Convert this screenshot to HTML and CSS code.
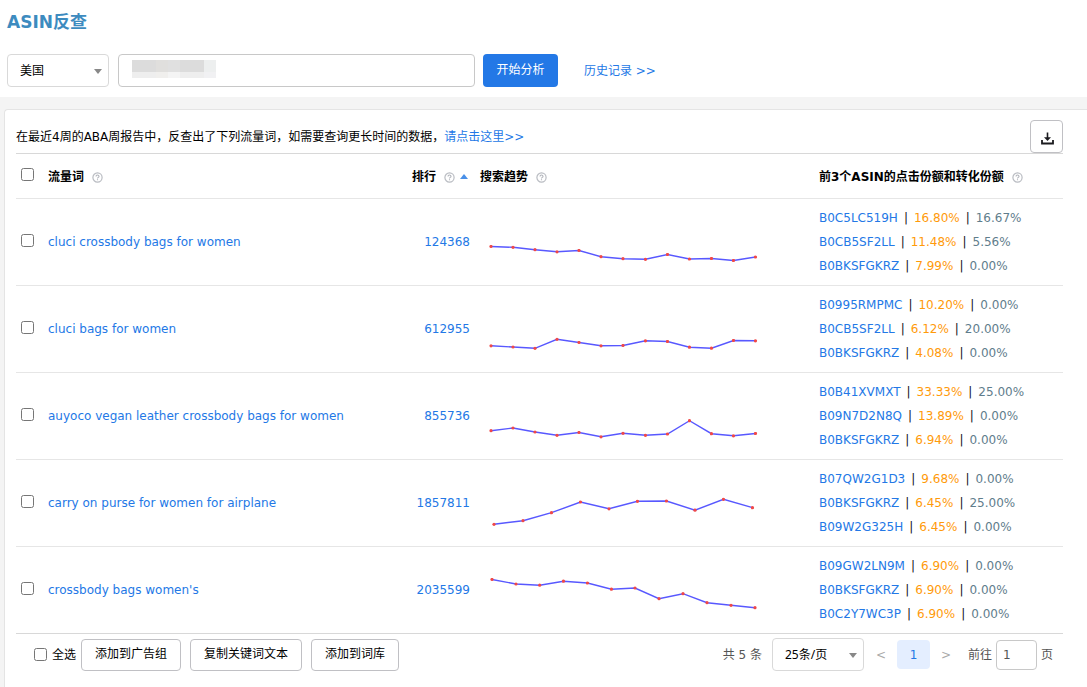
FILE: index.html
```html
<!DOCTYPE html>
<html lang="zh-CN">
<head>
<meta charset="utf-8">
<title>ASIN反查</title>
<link rel="stylesheet" href="styles.css">
</head>
<body>
<svg class="defs" aria-hidden="true">
  <defs>
    <marker id="dot" markerWidth="4" markerHeight="4" refX="2" refY="2" markerUnits="userSpaceOnUse"><circle cx="2" cy="2" r="1.6" fill="#f04848"/></marker>
    <symbol id="help" viewBox="0 0 11 11"><circle cx="5.5" cy="5.5" r="4.6" fill="none" stroke="#b9bcc2" stroke-width="1.2"/><path d="M4 4.6C4 2.6 7 2.6 7 4.4C7 5.4 5.5 5.4 5.5 6.5M5.5 7.2V8.3" fill="none" stroke="#b0b3ba" stroke-width="1.1"/></symbol>
    <symbol id="caret" viewBox="0 0 8 5"><path d="M0 0H8L4 5Z" fill="#888"/></symbol>
  </defs>
</svg>
<header class="top">
  <h1 class="title">ASIN反查</h1>
  <form class="search">
    <div class="select-box country">
      <select class="select" aria-label="站点"><option>美国</option></select>
      <svg class="caret"><use href="#caret"/></svg>
    </div>
    <div class="asin-box">
      <input class="asin" type="text" aria-label="ASIN">
      <div class="mask"><i></i><i></i><i></i><i></i><i></i><i></i><i></i></div>
    </div>
    <button class="primary" type="button">开始分析</button>
    <a class="history" href="#">历史记录 &gt;&gt;</a>
  </form>
</header>
<main class="card">
  <div class="intro">
    <p class="note">在最近4周的ABA周报告中，反查出了下列流量词，如需要查询更长时间的数据，<a href="#">请点击这里&gt;&gt;</a></p>
    <button class="download" type="button" aria-label="下载"><svg width="13" height="13" viewBox="0 0 13 13"><path d="M6.5 0.5V7" fill="none" stroke="#1b1b1f" stroke-width="1.6"/><path d="M3 5.2H10L6.5 9Z" fill="#1b1b1f"/><path d="M1 8V11.5H12V8" fill="none" stroke="#1b1b1f" stroke-width="1.8"/></svg></button>
  </div>
  <table class="words">
    <thead>
      <tr>
        <th class="c-check"><input type="checkbox" aria-label="选择全部"></th>
        <th class="c-word">流量词<svg class="help"><use href="#help"/></svg></th>
        <th class="c-rank">排行<svg class="help"><use href="#help"/></svg><svg class="sort" viewBox="0 0 8 5"><path d="M0 5H8L4 0Z" fill="#4a90e8"/></svg></th>
        <th class="c-trend">搜索趋势<svg class="help"><use href="#help"/></svg></th>
        <th class="c-share">前3个ASIN的点击份额和转化份额<svg class="help"><use href="#help"/></svg></th>
      </tr>
    </thead>
    <tbody>
      <tr>
        <td class="c-check"><input type="checkbox" aria-label="cluci crossbody bags for women"></td>
        <td><a href="#">cluci crossbody bags for women</a></td>
        <td class="c-rank"><a href="#">124368</a></td>
        <td class="c-trend"><svg class="trend" viewBox="0 -1 300 86"><polyline points="11,46.5 33,47.3 55,49.7 77,51.8 99,50.5 121,56.7 143,58.7 165.5,59.3 187.5,54.5 209.5,59 231.5,58.5 253.5,60.5 275.5,57"/></svg></td>
        <td class="c-share">
          <div class="share"><a href="#">B0C5LC519H</a><b>|</b><em>16.80%</em><b>|</b><span>16.67%</span></div>
          <div class="share"><a href="#">B0CB5SF2LL</a><b>|</b><em>11.48%</em><b>|</b><span>5.56%</span></div>
          <div class="share"><a href="#">B0BKSFGKRZ</a><b>|</b><em>7.99%</em><b>|</b><span>0.00%</span></div>
        </td>
      </tr>
      <tr>
        <td class="c-check"><input type="checkbox" aria-label="cluci bags for women"></td>
        <td><a href="#">cluci bags for women</a></td>
        <td class="c-rank"><a href="#">612955</a></td>
        <td class="c-trend"><svg class="trend" viewBox="0 -1 300 86"><polyline points="11,58.8 33,60 55,61.3 77,52.3 99,55.5 121,58.8 143,58.5 165.5,53.8 187.5,54.5 209.5,60.2 231.5,61.2 253.5,53.5 275.5,53.8"/></svg></td>
        <td class="c-share">
          <div class="share"><a href="#">B0995RMPMC</a><b>|</b><em>10.20%</em><b>|</b><span>0.00%</span></div>
          <div class="share"><a href="#">B0CB5SF2LL</a><b>|</b><em>6.12%</em><b>|</b><span>20.00%</span></div>
          <div class="share"><a href="#">B0BKSFGKRZ</a><b>|</b><em>4.08%</em><b>|</b><span>0.00%</span></div>
        </td>
      </tr>
      <tr>
        <td class="c-check"><input type="checkbox" aria-label="auyoco vegan leather crossbody bags for women"></td>
        <td><a href="#">auyoco vegan leather crossbody bags for women</a></td>
        <td class="c-rank"><a href="#">855736</a></td>
        <td class="c-trend"><svg class="trend" viewBox="0 -1 300 86"><polyline points="11,56.7 33,54 55,58 77,61.3 99,58.5 121,62.8 143,59.3 165.5,61.3 187.5,60 209.5,46.7 231.5,59.7 253.5,61.8 275.5,59.5"/></svg></td>
        <td class="c-share">
          <div class="share"><a href="#">B0B41XVMXT</a><b>|</b><em>33.33%</em><b>|</b><span>25.00%</span></div>
          <div class="share"><a href="#">B09N7D2N8Q</a><b>|</b><em>13.89%</em><b>|</b><span>0.00%</span></div>
          <div class="share"><a href="#">B0BKSFGKRZ</a><b>|</b><em>6.94%</em><b>|</b><span>0.00%</span></div>
        </td>
      </tr>
      <tr>
        <td class="c-check"><input type="checkbox" aria-label="carry on purse for women for airplane"></td>
        <td><a href="#">carry on purse for women for airplane</a></td>
        <td class="c-rank"><a href="#">1857811</a></td>
        <td class="c-trend"><svg class="trend" viewBox="0 -1 300 86"><polyline points="14,63.3 43,59.7 71.5,51.7 100.5,41 129,47.8 157.5,40.3 186.5,40 215,49.2 243.5,38.3 272.5,46.7"/></svg></td>
        <td class="c-share">
          <div class="share"><a href="#">B07QW2G1D3</a><b>|</b><em>9.68%</em><b>|</b><span>0.00%</span></div>
          <div class="share"><a href="#">B0BKSFGKRZ</a><b>|</b><em>6.45%</em><b>|</b><span>25.00%</span></div>
          <div class="share"><a href="#">B09W2G325H</a><b>|</b><em>6.45%</em><b>|</b><span>0.00%</span></div>
        </td>
      </tr>
      <tr>
        <td class="c-check"><input type="checkbox" aria-label="crossbody bags women's"></td>
        <td><a href="#">crossbody bags women's</a></td>
        <td class="c-rank"><a href="#">2035599</a></td>
        <td class="c-trend"><svg class="trend" viewBox="0 -1 300 86"><polyline points="12,31.5 36,36 59.7,37.2 83.5,33.2 107.5,35 131.5,41.2 155,40 179,50.7 203,45.7 227,54.7 251,57.3 275,59.7"/></svg></td>
        <td class="c-share">
          <div class="share"><a href="#">B09GW2LN9M</a><b>|</b><em>6.90%</em><b>|</b><span>0.00%</span></div>
          <div class="share"><a href="#">B0BKSFGKRZ</a><b>|</b><em>6.90%</em><b>|</b><span>0.00%</span></div>
          <div class="share"><a href="#">B0C2Y7WC3P</a><b>|</b><em>6.90%</em><b>|</b><span>0.00%</span></div>
        </td>
      </tr>
    </tbody>
  </table>
  <footer class="foot">
    <label class="all"><input type="checkbox"><span>全选</span></label>
    <div class="actions">
      <button class="plain" type="button">添加到广告组</button>
      <button class="plain" type="button">复制关键词文本</button>
      <button class="plain" type="button">添加到词库</button>
    </div>
    <nav class="pager" aria-label="分页">
      <span class="total">共 5 条</span>
      <div class="select-box size">
        <select class="select" aria-label="每页条数"><option>25条/页</option></select>
        <svg class="caret"><use href="#caret"/></svg>
      </div>
      <button class="arrow" type="button">&lt;</button>
      <button class="page" type="button">1</button>
      <button class="arrow" type="button">&gt;</button>
      <label class="goto">前往<input type="text" value="1">页</label>
    </nav>
  </footer>
</main>
</body>
</html>
```
FILE: styles.css
```css
* { box-sizing: border-box; }
body {
  margin: 0;
  min-height: 100vh;
  display: flex;
  flex-direction: column;
  background: #f4f4f4;
  color: #000;
  font: 12px/20px "DejaVu Sans", "Noto Sans CJK SC", sans-serif;
}
a { color: #2378e6; text-decoration: none; }
button, input, select { font: inherit; color: inherit; margin: 0; }
input[type="checkbox"] { width: 13px; height: 13px; display: block; }
.defs { position: absolute; width: 0; height: 0; }

.top { background: #fff; padding: 10px 7px; }
.title { margin: 0; font-size: 17px; line-height: 24px; color: #3d8bbf; }
.search { display: flex; align-items: center; padding-top: 20px; }
.select-box { position: relative; }
.select {
  appearance: none;
  width: 100%;
  height: 33px;
  padding: 0 12px;
  border: 1px solid #d9d9d9;
  border-radius: 4px;
  background: #fff;
  font-family: "Noto Sans", "Noto Sans CJK SC", sans-serif;
}
.caret { position: absolute; right: 7px; top: 15px; width: 8px; height: 5px; pointer-events: none; }
.country { width: 102px; }
.asin-box { position: relative; width: 357px; margin: 0 8px 0 9px; }
.asin { display: block; width: 100%; height: 33px; padding: 0 12px; border: 1px solid #c8c8c8; border-radius: 4px; background: #fff; }
.mask { position: absolute; left: 14px; top: 6px; display: flex; }
.mask i { width: 12px; height: 18px; background: linear-gradient(#dcdcdc 12px, #eee 12px); }
.mask i:nth-child(3) { background: linear-gradient(#e0dfdd 12px, #f0efed 12px); }
.mask i:nth-child(4) { background: linear-gradient(#e0e0e0 12px, #f4f4f4 12px); }
.mask i:nth-child(7) { background: linear-gradient(#edefef 12px, #f1f1f3 12px); }
.primary { height: 33px; width: 75px; padding: 0 0 2px; border: 0; border-radius: 4px; background: #2378e6; color: #fff; }
.history { margin-left: 26px; }

.card {
  flex: 1;
  margin: 12px 0 0 4px;
  padding: 10px 24px 0 11px;
  background: #fff;
  border: 1px solid #e4e4e4;
  border-width: 1px 0 0 1px;
  border-radius: 4px 0 0 0;
}
.intro { display: flex; justify-content: space-between; align-items: center; }
.note { margin: 0; }
.download { display: flex; align-items: center; justify-content: center; width: 33px; height: 33px; padding: 3px 0 0 1px; border: 1px solid #c0c0c4; border-radius: 4px; background: #fff; }

.words { width: 100%; table-layout: fixed; border-collapse: separate; border-spacing: 0; border-top: 1px solid #d8d8d8; border-bottom: 1px solid #d8d8d8; }
.words th { height: 45px; padding: 1px 0 0; text-align: left; border-bottom: 1px solid #e6e6e6; }
.words td { height: 87px; padding: 0; border-bottom: 1px solid #e6e6e6; }
.words tr:last-child td { border-bottom: 0; height: 86px; }
.words .c-check { width: 32px; padding: 0 0 4px 5px; }
.words .c-rank { width: 120px; text-align: right; padding-right: 10px; }
.words th.c-rank { padding-right: 12px; }
.words .c-trend { width: 339px; }
.words .c-share { width: 244px; }
.help { width: 11px; height: 11px; margin-left: 8px; vertical-align: -2px; }
.sort { width: 8px; height: 5px; margin-left: 5px; vertical-align: 2px; }
.trend { display: block; width: 300px; height: 86px; }
.trend polyline { fill: none; stroke: #5858ff; stroke-width: 1.4; marker-start: url(#dot); marker-mid: url(#dot); marker-end: url(#dot); }
.share { display: flex; line-height: 24px; }
.share b { padding: 0 6px; font-weight: 400; color: #101020; }
.share em { font-style: normal; color: #ff9a0a; }
.share span { color: #5f7d8c; }

.foot { display: flex; align-items: center; padding: 4px 10px 0 18px; }
.all { display: flex; align-items: center; gap: 5px; }
.actions { display: flex; gap: 9px; margin-left: 5px; }
.plain { height: 32px; padding: 0 13px 2px; border: 1px solid #c0c0c4; border-radius: 4px; background: #fff; }
.pager { display: flex; align-items: center; margin-left: auto; color: #555; }
.size { width: 92px; margin: 0 10px; color: #000; }
.arrow { width: 16px; height: 29px; padding: 0; border: 0; background: none; color: #aaa; }
.size + .arrow { margin-left: -1px; }
.page { width: 33px; height: 29px; margin: 0 8px; padding: 0; border: 0; border-radius: 4px; background: #e4eeff; color: #2378e6; }
.goto { display: flex; align-items: center; gap: 4px; margin-left: 14px; }
.goto input { width: 41px; height: 30px; padding: 0 6px; border: 1px solid #c8c8c8; border-radius: 4px; background: #fff; }
```
